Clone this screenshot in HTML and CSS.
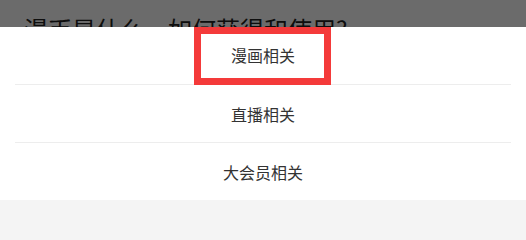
FILE: index.html
```html
<!DOCTYPE html>
<html lang="zh-CN">
<head>
<meta charset="utf-8">
<title>帮助</title>
<link rel="stylesheet" href="styles.css">
</head>
<body>
<div class="page">
  <h1 class="question">漫币是什么，如何获得和使用?</h1>
</div>
<div class="mask"></div>
<div class="sheet">
  <div class="item item-first">
    <span class="label">漫画相关</span>
    <div class="highlight"></div>
  </div>
  <div class="item">
    <span class="label">直播相关</span>
  </div>
  <div class="item item-last">
    <span class="label">大会员相关</span>
  </div>
  <div class="gap"></div>
</div>
</body>
</html>
```
FILE: styles.css
```css
html, body {
  margin: 0;
  padding: 0;
  height: 211px;
  overflow: hidden;
  background: #ffffff;
  font-family: "Noto Sans CJK SC", "Noto Sans", sans-serif;
}

.page {
  padding: 12px 24px 0;
  height: 27px;
  overflow: hidden;
}

.question {
  margin: 0;
  font-size: 24px;
  font-weight: 400;
  line-height: 1.448;
  color: #222222;
  white-space: nowrap;
}

.mask {
  position: absolute;
  inset: 0;
  background: rgba(0, 0, 0, 0.58);
}

.sheet {
  position: absolute;
  top: 27px;
  left: 0;
  right: 0;
  bottom: 0;
  background: #ffffff;
  display: flex;
  flex-direction: column;
}

.item {
  position: relative;
  height: 58px;
  flex: none;
  display: flex;
  align-items: center;
  justify-content: center;
  margin: 0 15px;
  border-bottom: 1px solid #ededed;
  box-sizing: border-box;
}

.item-last {
  height: 57px;
  border-bottom: none;
}

.label {
  font-size: 16px;
  color: #333333;
  line-height: 1;
}

.item-first .label {
  margin-top: -2px;
}

.gap {
  flex: 1;
  background: #f4f4f4;
}

.highlight {
  position: absolute;
  top: 0;
  left: 50%;
  width: 137px;
  height: 58px;
  margin-left: -69px;
  box-sizing: border-box;
  border: 7px solid #f43a3a;
}
```
